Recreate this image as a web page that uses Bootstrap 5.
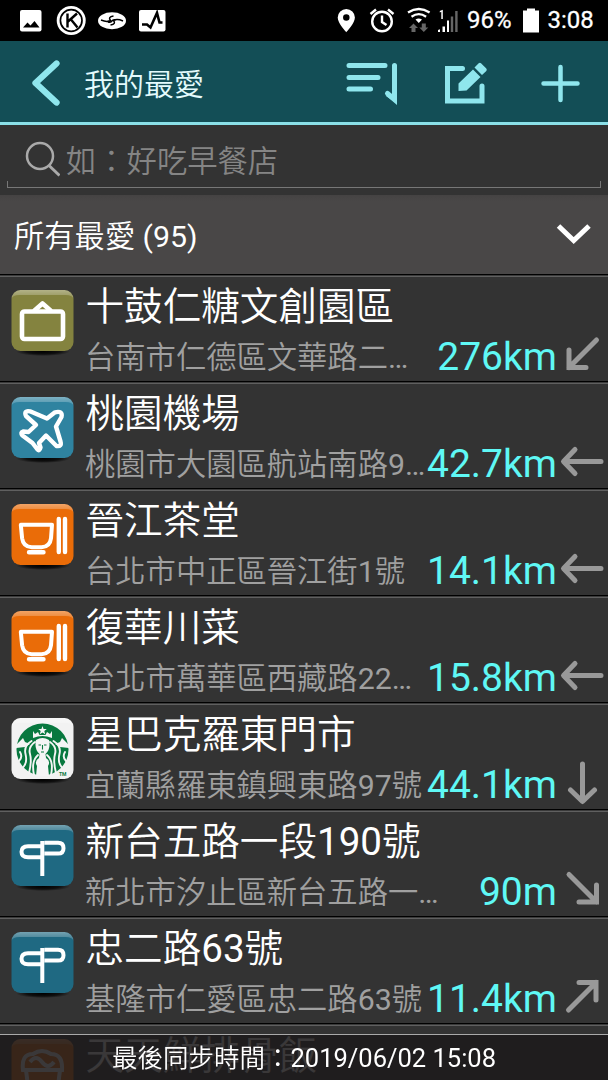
<!DOCTYPE html>
<html lang="zh-Hant">
<head>
<meta charset="utf-8">
<meta name="viewport" content="width=device-width, initial-scale=1">
<title>我的最愛</title>
<link href="https://cdn.jsdelivr.net/npm/bootstrap@5.3.0/dist/css/bootstrap.min.css" rel="stylesheet">
<style>
body{background:#333;color:#fff;font-family:Roboto,"Noto Sans CJK TC DemiLight","Noto Sans CJK TC",sans-serif;font-weight:350;height:1080px;overflow:hidden}
svg{display:block;flex:none}
.statusbar{height:41px;background:#000;font-size:24px;font-weight:400;line-height:43px;-webkit-text-stroke:.3px #fff}
.appbar{height:84px;background:#134e56;border-bottom:3px solid #8be0e8;color:#8fe6ed}
.appbar h1{font-size:30px;font-weight:350;color:#e4fbfd;line-height:87px;height:81px;margin:0 0 0 22px}
.searchbar{height:70px;padding:0 7px 7px}
.searchfield{height:63px;color:#858585;font-size:30.3px;padding-left:17px;background:linear-gradient(#777,#777) 0 100%/1px 6px no-repeat,linear-gradient(#777,#777) 100% 100%/1px 6px no-repeat;border-bottom:1px solid #777}
.searchfield span{line-height:74px;height:62px;padding-left:6px}
.grouphead{height:80px;background:linear-gradient(#454343,#494747 6px);border-bottom:1px solid #000;font-size:30.3px;padding-left:14px}
.grouphead>span{line-height:83px;height:79px}
.place{height:107px;background:#333;border-top:1px solid #3a3a3a;border-bottom:1px solid #000;box-shadow:inset 0 1px #606060;padding-left:10px}
.place-name{font-size:38.6px;line-height:61px;height:55px;white-space:nowrap;margin-left:-.5px}
.place-addr{font-size:30.3px;line-height:53px;color:#a0a0a0;white-space:nowrap;margin-left:-1px}
.place-dist{font-size:39px;font-weight:400;line-height:53px;color:#5ff8f5;white-space:nowrap}
.tile{margin:13px 11px 0 0}
.n{font-weight:400}
.syncbar{position:fixed;left:0;right:0;bottom:0;height:46px;background:rgba(29,26,28,.87);border-top:1px solid #aaa;font-size:25.5px;line-height:47px}
</style>
</head>
<body>
<svg width="0" height="0" class="position-absolute">
<defs>
<linearGradient id="shine" x2="0" y2="1"><stop offset="0" stop-color="#fff" stop-opacity=".38"/><stop offset="1" stop-color="#fff" stop-opacity=".12"/></linearGradient>
<radialGradient id="shadow"><stop offset="0" stop-color="#000"/><stop offset=".6" stop-color="#000" stop-opacity=".7"/><stop offset="1" stop-color="#000" stop-opacity="0"/></radialGradient>
</defs>
<symbol id="tile" viewBox="0 0 65 70">
<ellipse cx="33" cy="62.500" rx="27" ry="4.500" fill="url(#shadow)"/>
<rect x="1.500" y="1" width="62" height="61" rx="9" fill="currentColor"/>
<path d="M1.500 10a9 9 0 0 1 9-9h44a9 9 0 0 1 9 9q-1-4-8-4h-46q-7 0-8 4z" fill="url(#shine)"/>
</symbol>
<symbol id="sign" viewBox="0 0 65 70"><g fill="none" stroke="#fff" stroke-width="4.600" stroke-linejoin="round" stroke-linecap="round"><rect x="12" y="22.500" width="41" height="27.500" rx="2.500"/><path d="M24.500 21.500l8-7 8 7"/></g></symbol>
<symbol id="plane" viewBox="0 0 65 70"><path d="M20 15.300L37 22.500 45 16.300Q53 14.500 51.500 21L46 30.500 50.500 45.500Q52 51 46.500 50L36 39.500 29 47 30.500 51.500Q29.500 55.500 27.500 53.500L22.500 47 12.500 39.500Q10 36.500 13 35.500L18.500 36 26 29 16 20Q13.500 14 20 15.300z" fill="none" stroke="#fff" stroke-width="4.400" stroke-linejoin="round"/></symbol>
<symbol id="bowl" viewBox="0 0 65 70"><g fill="none" stroke="#fff" stroke-width="4" stroke-linecap="round" stroke-linejoin="round"><path d="M10.800 21.800H42l-1 13.500q-1 8.700-9.500 9h-9.700q-8.500-.3-9.700-9z"/><path d="M19 49.200h14.500M48.800 16v33M55 16v33" stroke-width="4.400"/></g></symbol>
<symbol id="post" viewBox="0 0 65 70"><path d="M32.300 19v31M28.500 22.300H18q-6.500 0-6.500 5.500t6.500 5.500h10.500M36.500 18.800H48q5.500 0 5.500 5.400t-5.500 5.400H36.500" fill="none" stroke="#fff" stroke-width="4" stroke-linecap="square"/></symbol>
<symbol id="siren" viewBox="0 0 65 70">
<circle cx="32.500" cy="32.500" r="26" fill="#08783f"/>
<g fill="none" stroke="#f5f5f5" stroke-linecap="round">
<path fill="#f5f5f5" stroke="none" d="M32.500 9l1.100 3 3.200.1-2.500 2 .9 3.100-2.700-1.700-2.700 1.700.9-3.100-2.500-2 3.200-.1zM23 14l2 3 3-2 1.500 3h6l1.500-3 3 2 2-3v7q-9.500-4-19 0zM6 28l7-7 2 4 5 2-5 3-9 1zM59 28l-7-7-2 4-5 2 5 3 9 1z"/>
<path d="M25 25q-7 5-5 12t-1 19M21.500 24q-8 5-6 13t-2 13M28 38q-7 6-4 20M40 25q7 5 5 12t1 19M43.500 24q8 5 6 13t2 13M37 38q7 6 4 20M10 35q3 5-1 9M55 35q-3 5 1 9" stroke-width="1.900"/>
<path fill="#f5f5f5" stroke="none" d="M26 23q6.500-4 13 0 2 9-3.500 14l.5 4q5 3 2 8l1 10h-13l1-10q-3-5 2-8l.5-4q-5.500-5-3.500-14z"/>
</g>
<path d="M28.500 28h2.500M34 28h2.500M32.500 28v4.500M31 35h3" fill="none" stroke="#08783f" stroke-width="1.100"/>
<text x="49" y="58.500" font-size="5" font-weight="700" fill="#08783f">TM</text>
</symbol>
<symbol id="aw" viewBox="0 0 46 46"><path d="M41 22.500H4M15 10.500L3.500 22.500 15 34.500" fill="none" stroke="#999" stroke-width="5" stroke-linecap="round" stroke-linejoin="round"/></symbol>
<symbol id="asw" viewBox="0 0 46 46"><path d="M36.500 9L9 36.500M9 19v17.500h17" fill="none" stroke="#999" stroke-width="5" stroke-linecap="round"/></symbol>
</svg>

<header class="statusbar d-flex align-items-center">
<svg width="608" height="41" viewBox="0 0 608 41" class="position-absolute">
<g fill="#fff">
<rect x="20" y="10" width="21.500" height="21.500" rx="2"/><circle cx="71.200" cy="20.500" r="14.500"/><ellipse cx="112" cy="20.800" rx="14" ry="8.500"/><rect x="139" y="10" width="26.500" height="21.500" rx="2"/>
<path fill-rule="evenodd" d="M346.300 9a8.600 8.600 0 0 0-8.600 8.600c0 6 8.600 14.600 8.600 14.600s8.600-8.600 8.600-14.600a8.600 8.600 0 0 0-8.600-8.600zm0 5.200a3.200 3.200 0 1 1 0 6.500 3.200 3.200 0 0 1 0-6.500z"/>
<path d="M523 10.500h4V8.500h8v2h4v22h-16z"/>
<path d="M415.500 19.500q3-2 6.500 0L418.800 23zM438 32v-2l2-.8V32zM442.500 26.500h2.500V32h-2.500zM447 20.500h2V32h-2zM439.800 11l3-1.200V19h-1.500v-7.200l-1.500.6z"/>
</g>
<path d="M23 27.500l4.500-5 3 3 4-4.500 5 6.500z"/>
<g fill="none" stroke="#000"><circle cx="71.200" cy="20.500" r="10.800" stroke-width="1.700"/><path d="M67.500 13.500v14M77 13.500l-9 8M71 19.500l6.500 8" stroke-width="2.400"/>
<path d="M101 20q6 2.500 9.500.5-3-3.500 3-4.500M123 21q-6-2.500-9.500-.5 3 3.500-3 4.500M108 22q3 1 4-1t4-1" stroke-width="1.500"/>
<path d="M142 24.500h5l3.500 3 6.500-14.500 2.500 9.500h3" stroke-width="2.600"/></g>
<g fill="none" stroke="#fff" stroke-width="2.400"><circle cx="382" cy="21.500" r="9.800"/><path d="M382 15.500v6.500l4.500 3M370.500 14l5.500-4.500M393.500 14l-5.500-4.500"/><path d="M408 12.500q10.800-7 21.600 0M411.500 16.700q7.300-5 14.600 0" stroke-width="2.300"/></g>
<g fill="#666"><path d="M413.500 23.500l4.500 4.500h-2.500v4h-4v-4H409zM423.800 32l4.500-4.500h-2.500v-4h-4v4h-2.500zM450.800 16.500h2.400V32h-2.400zM455.200 11h2.400v21h-2.400z"/></g>
</svg>
<span style="margin-left:467px">96%</span><span style="margin-left:36px">3:08</span>
</header>

<nav class="appbar d-flex">
<svg width="62" height="81" viewBox="0 0 62 81"><path d="M56.500 22.500L35.500 42 56.500 61.500" fill="none" stroke="#8fe6ed" stroke-width="6.300" stroke-linecap="round" stroke-linejoin="round"/></svg>
<h1>我的最愛</h1>
<svg width="268" height="81" viewBox="340 41 268 81" class="ms-auto" fill="none" stroke="#8fe6ed" stroke-width="5" stroke-linecap="round">
<path d="M349 65.500h36M349 77.500h29M349 89h21.500M394.500 65.500v34l-7-6" /><path d="M386 96l11 8v-9z" fill="#8fe6ed" stroke="none"/>
<path d="M462.500 68.500h-15v32.500h34.500V86" stroke-linejoin="miter"/>
<path d="M458.500 91v-7.500l14.500-14 7.500 7.500-14 13.500zM474.500 67.500l4.200-4.200q1.200-1 2.300 0l5.300 5.300q1 1.200 0 2.300l-4.300 4.200z" fill="#8fe6ed" stroke="none"/>
<path d="M543.500 83.500h34M560.500 67v33" stroke-width="4.500"/>
</svg>
</nav>

<div class="searchbar"><div class="searchfield d-flex">
<svg width="36" height="62" viewBox="24 125 36 62" fill="none" stroke="#aaa" stroke-width="2.500"><circle cx="40" cy="156" r="13"/><path d="M49 165.500l10.500 10" stroke-width="3"/></svg>
<span>如：好吃早餐店</span></div></div>

<div class="grouphead d-flex justify-content-between"><span>所有最愛 <span class="n">(95)</span></span>
<svg width="52" height="79" viewBox="556 195 52 79"><path d="M558.500 226l15.200 14.500L589 226" fill="none" stroke="#fff" stroke-width="5"/></svg></div>

<main>
<div class="place d-flex"><svg class="tile" width="65" height="70" color="#84833f"><use href="#tile"/><use href="#sign"/></svg>
<div class="flex-grow-1"><div class="place-name">十鼓仁糖文創園區</div><div class="d-flex"><span class="place-addr">台南市仁德區文華路二<span class="n">…</span></span><span class="place-dist ms-auto">276km</span><svg width="51" height="46" viewBox="-3 0 51 46"><use href="#asw" width="46" height="46"/></svg></div></div></div>

<div class="place d-flex"><svg class="tile" width="65" height="70" color="#2f83a0"><use href="#tile"/><use href="#plane"/></svg>
<div class="flex-grow-1"><div class="place-name">桃園機場</div><div class="d-flex"><span class="place-addr">桃園市大園區航站南路<span class="n">9…</span></span><span class="place-dist ms-auto">42.7km</span><svg width="51" height="46" viewBox="-3 -1 51 46"><use href="#aw" width="46" height="46"/></svg></div></div></div>

<div class="place d-flex"><svg class="tile" width="65" height="70" color="#ea6c08"><use href="#tile"/><use href="#bowl"/></svg>
<div class="flex-grow-1"><div class="place-name">晉江茶堂</div><div class="d-flex"><span class="place-addr">台北市中正區晉江街<span class="n">1</span>號</span><span class="place-dist ms-auto">14.1km</span><svg width="51" height="46" viewBox="-3 -1 51 46"><use href="#aw" width="46" height="46"/></svg></div></div></div>

<div class="place d-flex"><svg class="tile" width="65" height="70" color="#ea6c08"><use href="#tile"/><use href="#bowl"/></svg>
<div class="flex-grow-1"><div class="place-name">復華川菜</div><div class="d-flex"><span class="place-addr">台北市萬華區西藏路<span class="n">22…</span></span><span class="place-dist ms-auto">15.8km</span><svg width="51" height="46" viewBox="-3 -1 51 46"><use href="#aw" width="46" height="46"/></svg></div></div></div>

<div class="place d-flex"><svg class="tile" width="65" height="70" color="#f2f2f2"><use href="#tile"/><use href="#siren"/></svg>
<div class="flex-grow-1"><div class="place-name">星巴克羅東門市</div><div class="d-flex"><span class="place-addr">宜蘭縣羅東鎮興東路<span class="n">97</span>號</span><span class="place-dist ms-auto">44.1km</span><svg width="51" height="46" viewBox="-3 -1 51 46"><use href="#aw" width="46" height="46" transform="rotate(-90 22.500 22.500)"/></svg></div></div></div>

<div class="place d-flex"><svg class="tile" width="65" height="70" color="#1f6982"><use href="#tile"/><use href="#post"/></svg>
<div class="flex-grow-1"><div class="place-name">新台五路一段<span class="n">190</span>號</div><div class="d-flex"><span class="place-addr">新北市汐止區新台五路一<span class="n">…</span></span><span class="place-dist ms-auto">90m</span><svg width="51" height="46" viewBox="-3 0 51 46"><use href="#asw" width="46" height="46" transform="rotate(-90 22.500 22.500)"/></svg></div></div></div>

<div class="place d-flex"><svg class="tile" width="65" height="70" color="#1f6982"><use href="#tile"/><use href="#post"/></svg>
<div class="flex-grow-1"><div class="place-name">忠二路<span class="n">63</span>號</div><div class="d-flex"><span class="place-addr">基隆市仁愛區忠二路<span class="n">63</span>號</span><span class="place-dist ms-auto">11.4km</span><svg width="51" height="46" viewBox="-3 -1 51 46"><use href="#asw" width="46" height="46" transform="rotate(180 22.500 22.500)"/></svg></div></div></div>

<div class="place d-flex"><svg class="tile" width="65" height="70" color="#ea6c08"><use href="#tile"/><path d="M13 32q-2-16 10-16 9-6 18 0 12 0 11 16zM16 32l3 24h28l3-24M20 24q6-8 12 0t12 0" fill="none" stroke="#fff" stroke-width="4"/></svg>
<div class="place-name">天天鮮排骨飯</div></div>
</main>

<footer class="syncbar text-center">最後同步時間：<span class="n">2019/06/02 15:08</span></footer>
<script src="https://cdn.jsdelivr.net/npm/bootstrap@5.3.0/dist/js/bootstrap.bundle.min.js"></script>
</body>
</html>
